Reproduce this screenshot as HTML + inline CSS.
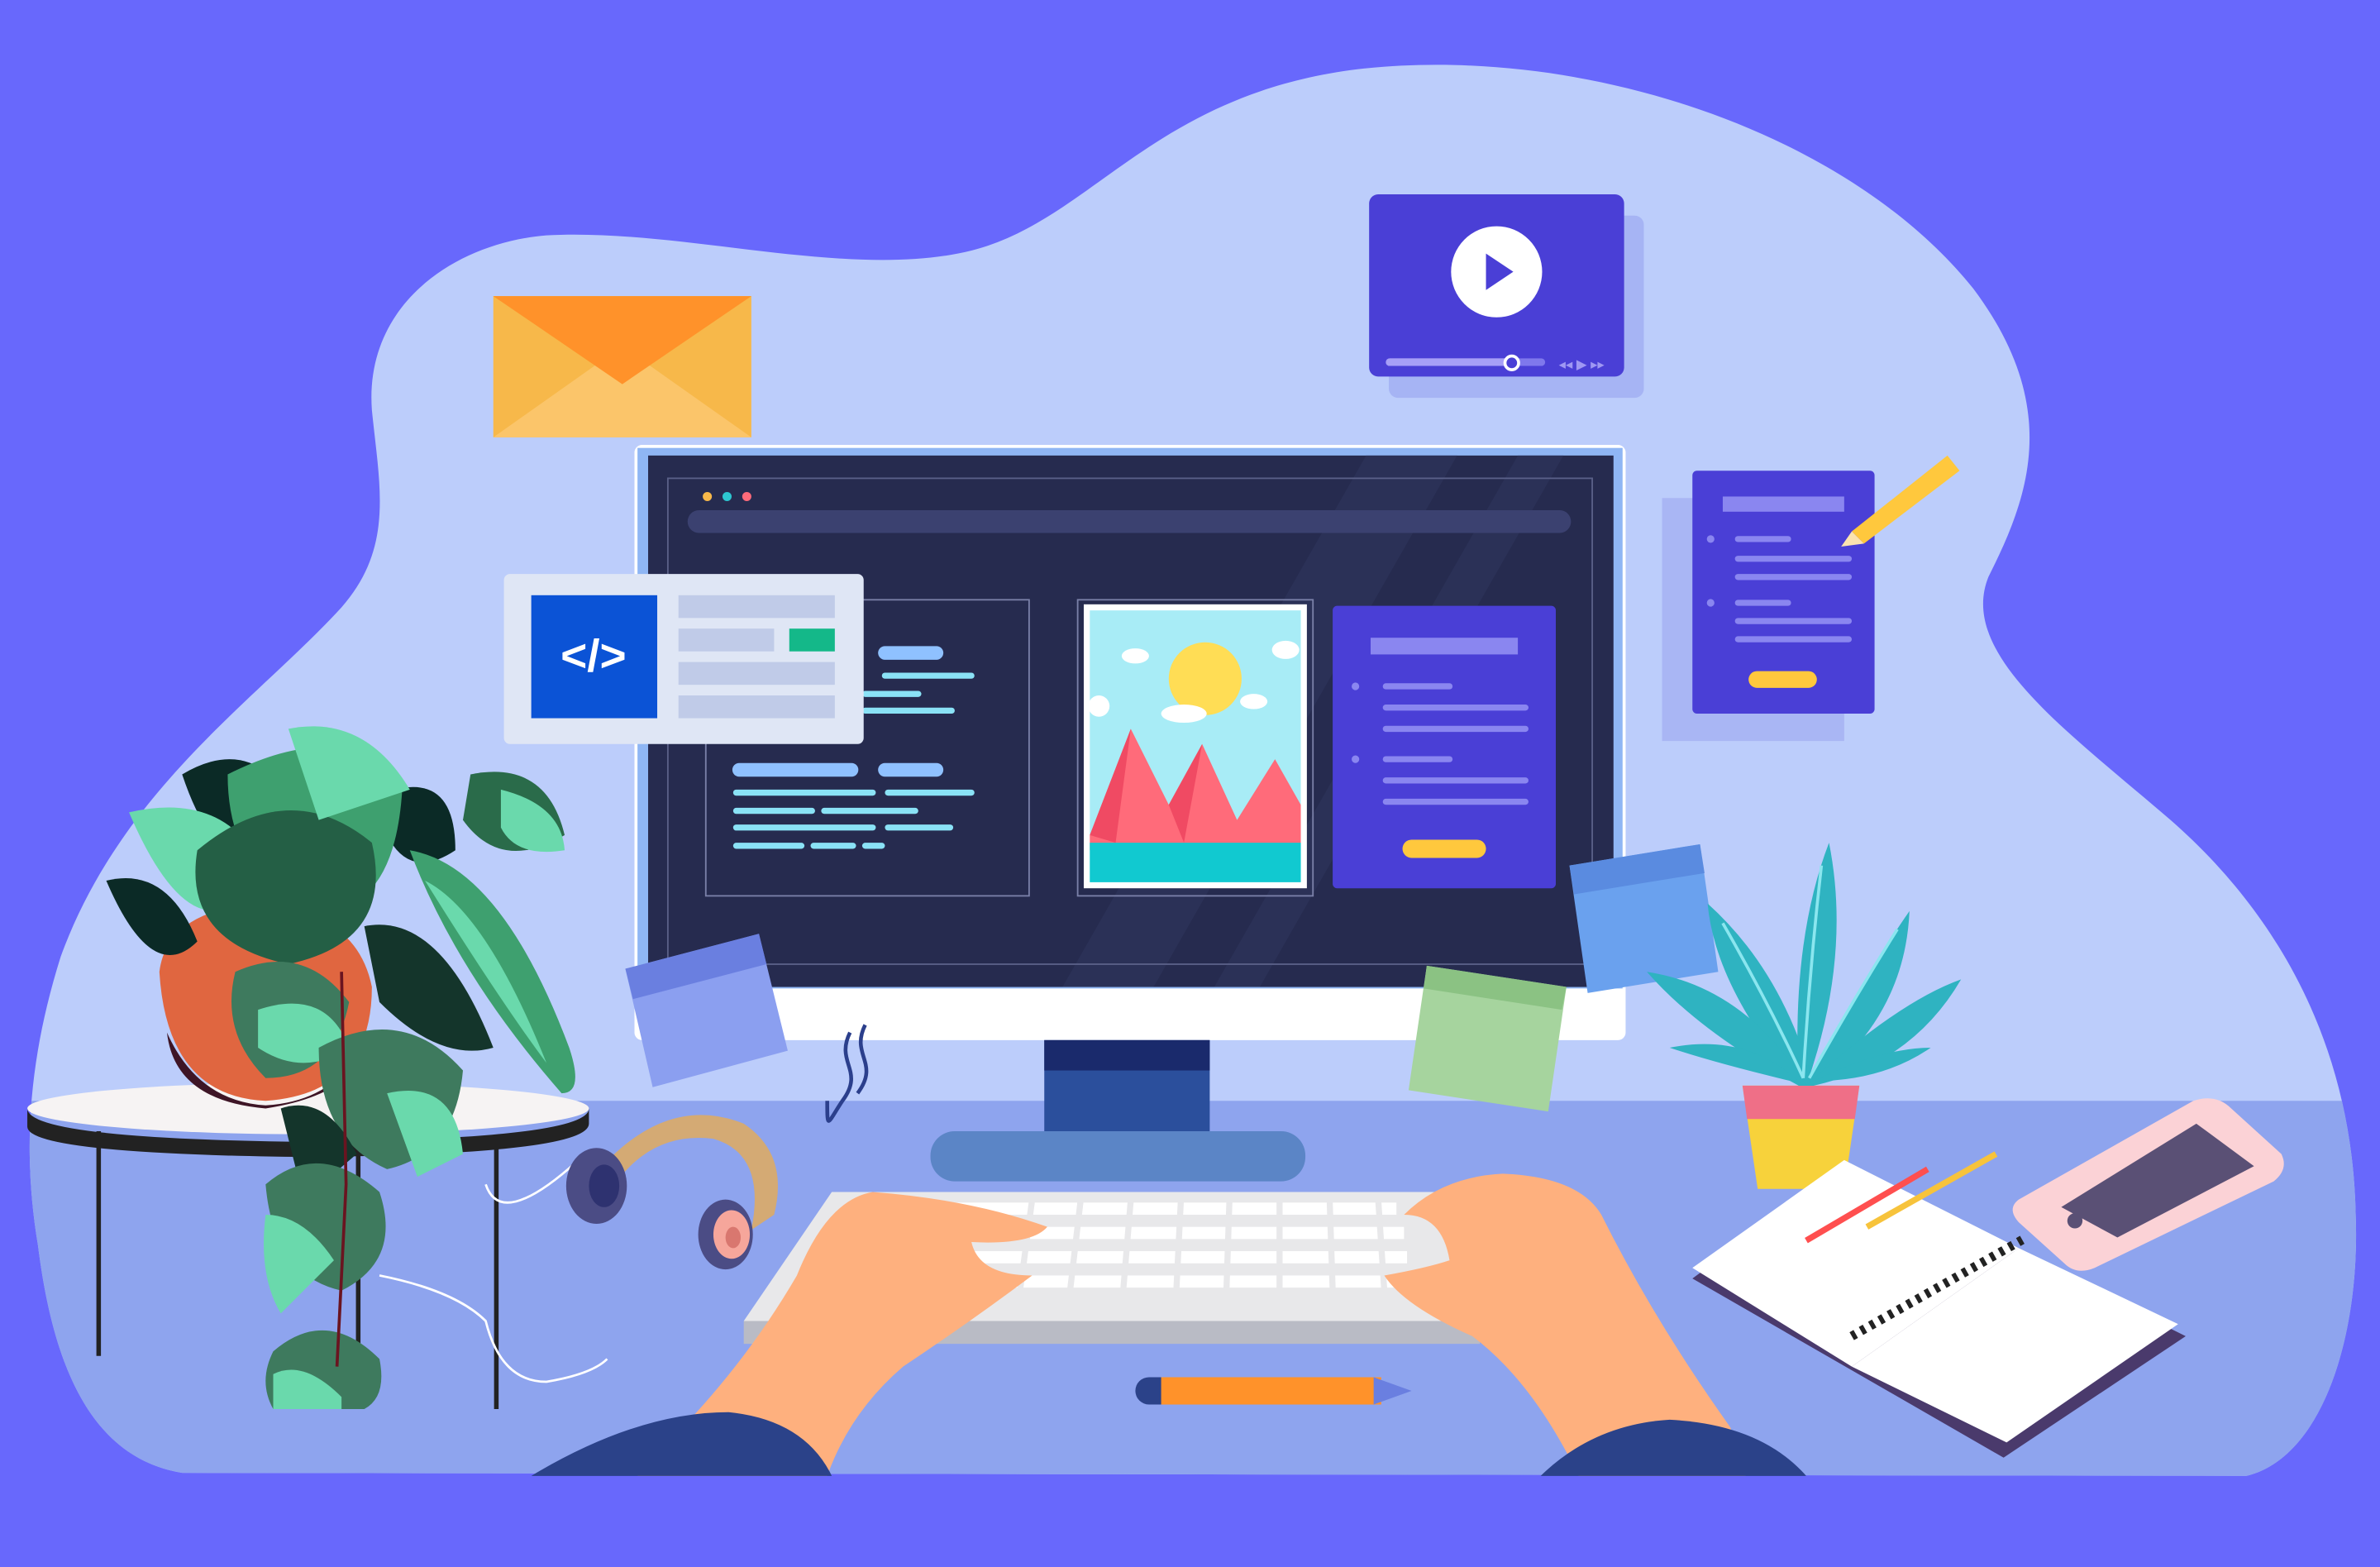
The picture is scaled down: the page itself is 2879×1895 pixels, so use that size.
<!DOCTYPE html>
<html><head><meta charset="utf-8"><style>html,body{margin:0;padding:0;background:#6868fc}svg{display:block}</style></head>
<body>
<svg width="2879" height="1895" viewBox="0 0 1568 1032" preserveAspectRatio="none" xmlns="http://www.w3.org/2000/svg">
<defs>
<clipPath id="blob"><path id="bp" d="M120 970 C60 960 35 900 25 820 C15 760 18 700 40 630 C80 520 170 460 225 400 C260 360 250 320 245 270 C240 200 300 160 360 155 C450 150 560 185 640 165 C720 145 760 60 900 45 C1050 30 1220 90 1300 190 C1360 270 1335 330 1310 380 C1290 430 1360 480 1430 540 C1510 610 1550 700 1552 800 C1555 880 1530 960 1480 972 Z"/></clipPath>
</defs>
<rect width="1568" height="1032" fill="#6868fc"/>
<g clip-path="url(#blob)">
<rect width="1568" height="1032" fill="#bccdfb"/>
<rect x="0" y="725" width="1568" height="310" fill="#8ea4ee"/>
</g>
<rect x="325" y="195" width="170" height="93" fill="#f7b84a"/>
<path d="M325 288 L410 228 L495 288 Z" fill="#fbc56a"/>
<path d="M325 195 L410 253 L495 195 Z" fill="#ff922a"/>
<rect x="915" y="142" width="168" height="120" rx="6" fill="#a6b4f4"/>
<rect x="902" y="128" width="168" height="120" rx="6" fill="#4a3fd6"/>
<circle cx="986" cy="179" r="30" fill="#fff"/>
<path d="M979 167 L997 179 L979 191 Z" fill="#4a3fd6"/>
<rect x="913" y="236" width="105" height="5" rx="2.5" fill="#7f78ec"/>
<rect x="913" y="236" width="84" height="5" rx="2.5" fill="#a79ff7"/>
<circle cx="996" cy="239" r="4.5" fill="#4a3fd6" stroke="#fff" stroke-width="2"/>
<text x="1027" y="243" font-family="Liberation Sans, sans-serif" font-size="9" fill="#9f98f3">◂◂ ▶ ▸▸</text>
<rect x="1095" y="328" width="120" height="160" fill="#a9b6f4"/>
<rect x="1115" y="310" width="120" height="160" rx="3" fill="#4a3fd6"/>
<rect x="1135" y="327" width="80" height="10" fill="#8a86f0"/>
<g fill="#8a86f0"><circle cx="1127" cy="355" r="2.5"/><circle cx="1127" cy="397" r="2.5"/></g>
<g stroke="#8a86f0" stroke-width="4" stroke-linecap="round"><line x1="1145" y1="355" x2="1178" y2="355"/><line x1="1145" y1="368" x2="1218" y2="368"/><line x1="1145" y1="380" x2="1218" y2="380"/><line x1="1145" y1="397" x2="1178" y2="397"/><line x1="1145" y1="409" x2="1218" y2="409"/><line x1="1145" y1="421" x2="1218" y2="421"/></g>
<rect x="1152" y="442" width="45" height="11" rx="5.5" fill="#ffc83d"/>
<path d="M1220 350 L1283 300 L1291 310 L1228 358 Z" fill="#ffc83d"/>
<path d="M1220 350 L1228 358 L1213 360 Z" fill="#fbe3b0"/>
<rect x="418" y="293" width="653" height="392" rx="5" fill="#fff"/>
<rect x="420" y="295" width="649" height="356" fill="#8fb6f4"/>
<rect x="427" y="300" width="636" height="350" fill="#262b4f"/>
<path d="M700 650 L900 300 L960 300 L760 650 Z M800 650 L1000 300 L1030 300 L830 650 Z" fill="#2d3359" opacity=".8"/>
<rect x="440" y="315" width="609" height="320" fill="none" stroke="#5a6088" stroke-width="1"/>
<circle cx="466" cy="327" r="3" fill="#f7b84a"/><circle cx="479" cy="327" r="3" fill="#2dc6d0"/><circle cx="492" cy="327" r="3" fill="#ff6b7a"/>
<rect x="453" y="336" width="582" height="15" rx="7.5" fill="#3b4170"/>
<rect x="465" y="395" width="213" height="195" fill="none" stroke="#7a80a8" stroke-width="1"/>
<g stroke="#8fc1ff" stroke-width="9" stroke-linecap="round"><line x1="583" y1="430" x2="617" y2="430"/><line x1="487" y1="507" x2="561" y2="507"/><line x1="583" y1="507" x2="617" y2="507"/></g>
<g stroke="#8ae2f6" stroke-width="4" stroke-linecap="round"><line x1="583" y1="445" x2="640" y2="445"/><line x1="570" y1="457" x2="605" y2="457"/><line x1="570" y1="468" x2="627" y2="468"/><line x1="485" y1="522" x2="575" y2="522"/><line x1="585" y1="522" x2="640" y2="522"/><line x1="485" y1="534" x2="535" y2="534"/><line x1="543" y1="534" x2="603" y2="534"/><line x1="485" y1="545" x2="575" y2="545"/><line x1="585" y1="545" x2="626" y2="545"/><line x1="485" y1="557" x2="528" y2="557"/><line x1="536" y1="557" x2="562" y2="557"/><line x1="570" y1="557" x2="581" y2="557"/></g>
<rect x="710" y="395" width="155" height="195" fill="none" stroke="#7a80a8"/>
<rect x="714" y="398" width="147" height="187" fill="#fff"/>
<rect x="718" y="402" width="139" height="179" fill="#a8ecf6"/>
<circle cx="794" cy="447" r="24" fill="#ffdd55"/>
<path d="M718 550 L745 480 L770 530 L792 490 L815 540 L840 500 L857 530 L857 560 L718 560 Z" fill="#ff6b7a"/>
<path d="M718 550 L745 480 L735 555 Z M792 490 L780 555 L770 530Z" fill="#f04a63"/>
<rect x="718" y="555" width="139" height="26" fill="#11c9d0"/>
<g fill="#fff"><ellipse cx="780" cy="470" rx="15" ry="6"/><ellipse cx="748" cy="432" rx="9" ry="5"/><ellipse cx="826" cy="462" rx="9" ry="5"/><ellipse cx="847" cy="428" rx="9" ry="6"/><ellipse cx="724" cy="465" rx="7" ry="7"/></g>
<rect x="878" y="399" width="147" height="186" rx="3" fill="#4a3fd6"/>
<rect x="903" y="420" width="97" height="11" fill="#8a86f0"/>
<g fill="#8a86f0"><circle cx="893" cy="452" r="2.5"/><circle cx="893" cy="500" r="2.5"/></g>
<g stroke="#8a86f0" stroke-width="4" stroke-linecap="round"><line x1="913" y1="452" x2="955" y2="452"/><line x1="913" y1="466" x2="1005" y2="466"/><line x1="913" y1="480" x2="1005" y2="480"/><line x1="913" y1="500" x2="955" y2="500"/><line x1="913" y1="514" x2="1005" y2="514"/><line x1="913" y1="528" x2="1005" y2="528"/></g>
<rect x="924" y="553" width="55" height="12" rx="6" fill="#ffc83d"/>
<rect x="688" y="685" width="109" height="62" fill="#2b4f9c"/>
<rect x="688" y="685" width="109" height="20" fill="#1a2a6c"/>
<rect x="613" y="745" width="247" height="33" rx="16" fill="#5b85c6"/>
<rect x="332" y="378" width="237" height="112" rx="4" fill="#dfe6f5"/>
<rect x="350" y="392" width="83" height="81" fill="#0b53d6"/>
<text x="391" y="442" font-family="Liberation Sans, sans-serif" font-size="30" font-weight="bold" fill="#fff" text-anchor="middle">&lt;/&gt;</text>
<rect x="447" y="392" width="103" height="15" fill="#c0cbe8"/>
<rect x="447" y="414" width="63" height="15" fill="#c0cbe8"/>
<rect x="520" y="414" width="30" height="15" fill="#14b889"/>
<rect x="447" y="436" width="103" height="15" fill="#c0cbe8"/>
<rect x="447" y="458" width="103" height="15" fill="#c0cbe8"/>
<path d="M412 638 L500 615 L519 692 L430 716 Z" fill="#8b9ff0"/>
<path d="M412 638 L500 615 L505 635 L417 658 Z" fill="#6a7fe0"/>
<path d="M940 636 L1032 650 L1020 732 L928 718 Z" fill="#a6d49e"/>
<path d="M940 636 L1032 650 L1029 665 L938 651 Z" fill="#8bc283"/>
<path d="M1034 570 L1120 556 L1132 640 L1046 654 Z" fill="#6aa1ee"/>
<path d="M1034 570 L1120 556 L1123 575 L1037 589 Z" fill="#5a8be0"/>
<path d="M560 680 C550 700 570 705 555 725 C545 740 545 745 545 725 M570 675 C560 695 580 700 565 720" stroke="#2b3f8c" stroke-width="2.5" fill="none"/>
<ellipse cx="203" cy="730" rx="185" ry="17" fill="#f6f3f3"/>
<path d="M18 730 Q18 750 203 752 Q388 750 388 730 L388 740 Q388 760 203 762 Q18 760 18 742 Z" fill="#222"/>
<g stroke="#222" stroke-width="3"><line x1="65" y1="745" x2="65" y2="893"/><line x1="327" y1="750" x2="327" y2="928"/><line x1="236" y1="760" x2="236" y2="890"/></g>
<path d="M105 640 Q110 600 170 595 Q235 600 245 650 Q245 720 175 725 Q110 722 105 640 Z" fill="#e06640"/>
<path d="M110 680 Q130 725 175 728 Q225 725 243 680 Q240 720 175 730 Q115 725 110 680Z" fill="#3e1526"/>
<g>
<path d="M120 510 Q170 480 200 540 Q150 600 120 510Z" fill="#0b2a26"/>
<path d="M260 520 Q300 510 300 560 Q270 580 255 550Z" fill="#0b2a26"/>
<path d="M70 580 Q110 570 130 620 Q100 650 70 580Z" fill="#0b2a26"/>
<path d="M85 535 Q150 520 175 575 Q130 640 85 535Z" fill="#6ad9ac"/>
<path d="M150 510 Q230 470 265 520 Q260 600 210 600 Q150 580 150 510Z" fill="#3ea06f"/>
<path d="M130 560 Q190 510 245 555 Q260 620 190 635 Q120 620 130 560Z" fill="#245f45"/>
<path d="M190 480 Q240 470 270 520 L210 540 Z" fill="#6ad9ac"/>
<path d="M310 510 Q360 500 372 550 Q330 575 305 540Z" fill="#2a6b4a"/>
<path d="M330 520 Q370 530 372 560 Q340 565 330 545Z" fill="#6ad9ac"/>
<path d="M270 560 Q330 570 375 690 Q385 720 370 720 Q300 640 270 560Z" fill="#3ea06f"/>
<path d="M280 580 Q320 600 360 700 Q330 660 280 580Z" fill="#6ad9ac"/>
<path d="M240 610 Q290 600 325 690 Q290 700 250 660Z" fill="#14352b"/>
<path d="M155 640 Q200 620 230 660 Q220 710 175 710 Q145 680 155 640Z" fill="#3e7a5e"/>
<path d="M170 665 Q215 650 230 690 Q200 710 170 690Z" fill="#6ad9ac"/>
<path d="M210 690 Q265 660 305 705 Q300 760 255 770 Q210 750 210 690Z" fill="#3e7a5e"/>
<path d="M255 720 Q300 710 305 760 L275 775 Z" fill="#6ad9ac"/>
<path d="M185 730 Q215 720 235 760 L200 790 Z" fill="#14352b"/>
<path d="M175 780 Q210 750 250 785 Q265 830 225 850 Q180 840 175 780Z" fill="#3e7a5e"/>
<path d="M175 800 Q200 800 220 830 L185 865 Q170 840 175 800Z" fill="#6ad9ac"/>
<path d="M180 890 Q215 860 250 895 Q255 920 240 928 L180 928 Q170 910 180 890Z" fill="#3e7a5e"/>
<path d="M180 905 Q200 895 225 920 L225 928 L180 928Z" fill="#6ad9ac"/>
<path d="M225 640 L228 780 L222 900" stroke="#6a1420" stroke-width="2" fill="none"/>
</g>
<path d="M250 840 Q300 850 320 870 Q330 910 360 910 Q390 905 400 895" stroke="#fff" stroke-width="1.5" fill="none"/>
<path d="M380 765 Q330 810 320 780" stroke="#fff" stroke-width="1.5" fill="none"/>
<path d="M395 770 Q440 720 490 740 Q520 760 510 800 L495 810 Q505 760 470 750 Q430 745 405 780Z" fill="#d4aa74"/>
<ellipse cx="393" cy="781" rx="20" ry="25" fill="#4b4c85"/>
<ellipse cx="398" cy="781" rx="10" ry="14" fill="#2e3270"/>
<ellipse cx="478" cy="813" rx="18" ry="23" fill="#4b4c85"/>
<ellipse cx="482" cy="813" rx="12" ry="16" fill="#f6a69b"/>
<ellipse cx="483" cy="815" rx="5" ry="7" fill="#d9776f"/>
<path d="M548 785 L965 785 L975 870 L490 870 Z" fill="#e8e8ea"/>
<path d="M490 870 L975 870 L975 885 L490 885 Z" fill="#b9bbc5"/>
<g fill="#fff">
<rect x="620" y="792" width="300" height="8"/><rect x="615" y="808" width="310" height="8"/><rect x="612" y="824" width="315" height="8"/><rect x="608" y="840" width="325" height="8"/>
</g>
<g stroke="#e8e8ea" stroke-width="4"><line x1="680" y1="790" x2="672" y2="850"/><line x1="712" y1="790" x2="705" y2="850"/><line x1="745" y1="790" x2="740" y2="850"/><line x1="778" y1="790" x2="775" y2="850"/><line x1="810" y1="790" x2="808" y2="850"/><line x1="843" y1="790" x2="843" y2="850"/><line x1="876" y1="790" x2="878" y2="850"/><line x1="908" y1="790" x2="912" y2="850"/></g>
<path d="M440 950 Q490 900 525 840 Q545 790 575 785 Q640 790 690 808 Q680 820 640 818 Q645 840 680 840 Q640 870 595 900 Q560 930 545 972 L420 972 Z" fill="#feb07e"/>
<path d="M350 972 Q420 930 480 930 Q530 935 548 972 Z" fill="#2b4289"/>
<path d="M1040 972 Q1010 910 970 880 Q925 860 912 840 Q940 835 955 830 Q950 800 925 800 Q950 775 990 773 Q1040 775 1055 800 Q1090 870 1140 940 L1150 972 Z" fill="#feb07e"/>
<path d="M1015 972 Q1050 938 1100 935 Q1160 938 1190 972 Z" fill="#2b4289"/>
<rect x="748" y="907" width="165" height="18" rx="9" fill="#2b4289"/>
<rect x="765" y="907" width="145" height="18" fill="#ff922a"/>
<path d="M905 907 L930 916 L905 925 Z" fill="#6a7fe0"/>
<path d="M1148 715 L1225 715 L1215 783 L1158 783 Z" fill="#f7d23b"/>
<path d="M1148 715 L1225 715 L1222 737 L1151 737 Z" fill="#ef6f87"/>
<g fill="#2fb3c1">
<path d="M1185 715 Q1180 620 1205 555 Q1220 630 1190 715Z"/>
<path d="M1185 715 Q1130 650 1125 595 Q1175 640 1195 715Z"/>
<path d="M1190 715 Q1230 640 1258 600 Q1255 670 1195 715Z"/>
<path d="M1185 715 Q1120 680 1085 640 Q1150 650 1190 715Z"/>
<path d="M1190 715 Q1250 660 1292 645 Q1260 700 1195 715Z"/>
<path d="M1180 712 Q1130 700 1100 690 Q1150 680 1185 712Z"/>
<path d="M1195 712 Q1240 690 1272 690 Q1240 712 1195 712Z"/>
</g>
<g stroke="#8ae6ef" stroke-width="2" fill="none"><path d="M1200 570 Q1192 640 1188 710"/><path d="M1135 608 Q1165 660 1188 710"/><path d="M1250 612 Q1220 660 1192 710"/></g>
<path d="M1115 842 L1215 768 L1440 880 L1320 960 Z" fill="#4a3a6c"/>
<path d="M1115 835 L1215 764 L1330 822 L1220 900 Z" fill="#fff"/>
<path d="M1220 900 L1330 822 L1435 872 L1322 950 Z" fill="#fff"/>
<path d="M1220 880 L1335 815" stroke="#222" stroke-width="6" stroke-dasharray="3 4" fill="none"/>
<line x1="1190" y1="817" x2="1270" y2="770" stroke="#ff4f4f" stroke-width="4"/>
<line x1="1230" y1="808" x2="1315" y2="760" stroke="#f7c33b" stroke-width="4"/>
<path d="M1330 790 L1445 725 Q1460 720 1470 730 L1503 760 Q1508 770 1498 778 L1380 835 Q1368 840 1360 832 L1330 805 Q1322 796 1330 790Z" fill="#fbd2d6"/>
<path d="M1358 795 L1447 740 L1485 768 L1395 815 Z" fill="#5a5075"/>
<circle cx="1367" cy="804" r="5" fill="#5a5075"/>
</svg>
</body></html>
